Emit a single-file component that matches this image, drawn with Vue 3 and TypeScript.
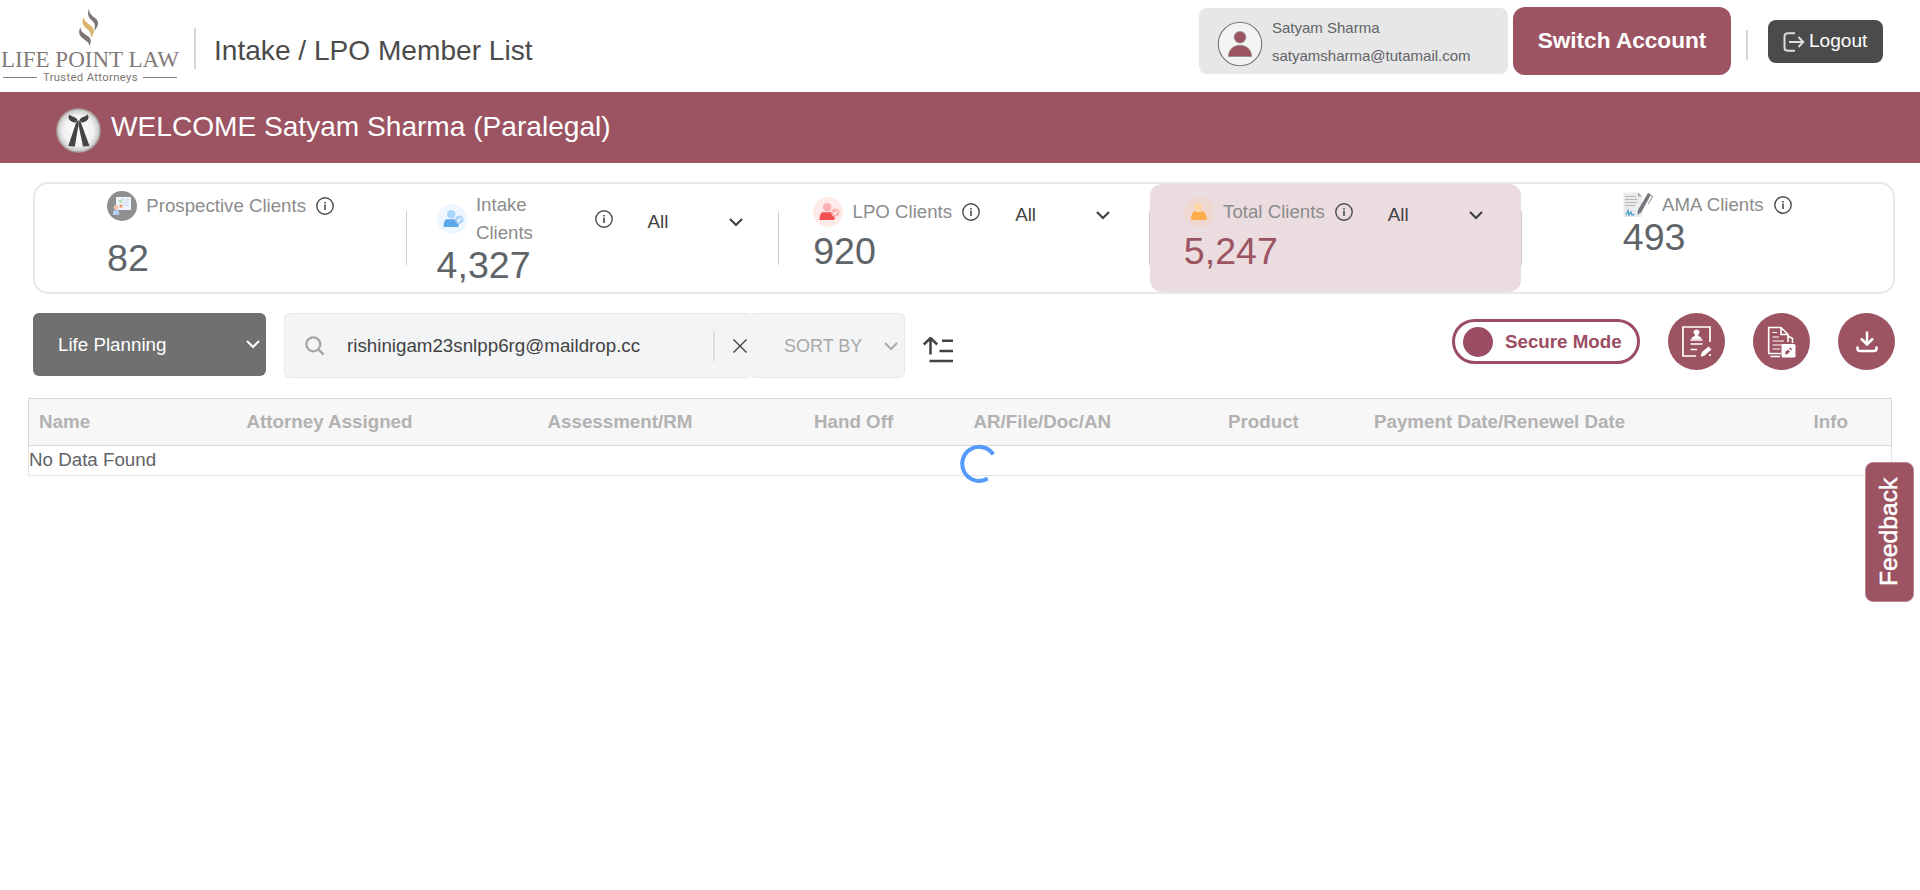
<script setup lang="ts">
interface StatCard {
  key: string
  label: string
  value: string
  select: boolean
  active?: boolean
}

const cards: StatCard[] = [
  { key: 'prospective', label: 'Prospective Clients', value: '82', select: false },
  { key: 'intake', label: 'Intake Clients', value: '4,327', select: true },
  { key: 'lpo', label: 'LPO Clients', value: '920', select: true },
  { key: 'total', label: 'Total Clients', value: '5,247', select: true, active: true },
  { key: 'ama', label: 'AMA Clients', value: '493', select: false },
]

const columns: string[] = [
  'Name',
  'Attorney Assigned',
  'Assessment/RM',
  'Hand Off',
  'AR/File/Doc/AN',
  'Product',
  'Payment Date/Renewel Date',
  'Info',
]
</script>

<template>
  <div class="page">
    <header class="topbar">
      <svg class="logo" width="181" height="86" viewBox="0 0 181 86">
        <g fill="#7d7473">
          <path d="M89 8.500C87 14.500 88.500 17.500 92 20.500C95.500 23.500 95.500 27 94 31C99 26 99.500 21.500 95 18C91 15 89 13 89 8.500Z" />
          <path d="M80.500 27C78 32 79 35.500 83 38.500C87.500 42 90 43 88.800 46.500C92 42 91.500 38.500 87 35.500C82.500 32.500 80.500 31 80.500 27Z" />
        </g>
        <path d="M83.800 17C81.500 22 82.500 25.500 86.500 28.500C90 31.500 91.500 33.500 90.700 38C95 33 95 29 90.500 25.500C86 22 84.300 21 83.800 17Z" fill="#dcb36c" />
        <text class="logo-name" x="1" y="66.500" textLength="178" lengthAdjust="spacingAndGlyphs">LIFE POINT LAW</text>
        <text class="logo-tag" x="43" y="80.500" textLength="94.500" lengthAdjust="spacing">Trusted Attorneys</text>
        <path d="M3 77.500H37M143 77.500H177" stroke="#8a8382" stroke-width="1.100" />
      </svg>
      <div class="rule rule-title"></div>
      <h1 class="title">Intake / LPO Member List</h1>

      <div class="user">
        <svg class="avatar" width="46" height="46" viewBox="0 0 46 46">
          <circle cx="23" cy="23" r="21.700" fill="#f3f3f3" stroke="#777" stroke-width="1.100" />
          <circle cx="23" cy="16.200" r="5.800" fill="#9c5462" stroke="#888" stroke-width=".7" />
          <path d="M11.500 35.500C11.500 20.500 34.500 20.500 34.500 35.500Z" fill="#9c5462" stroke="#888" stroke-width=".7" />
        </svg>
        <div class="user-lines">
          <div>Satyam Sharma</div>
          <div>satyamsharma@tutamail.com</div>
        </div>
      </div>
      <button class="switch">Switch Account</button>
      <div class="rule rule-logout"></div>
      <button class="logout">
        <svg width="22" height="20" viewBox="0 0 22 20" fill="none" stroke="#dcdcdc" stroke-width="2">
          <path d="M12 1.200H5Q1.500 1.200 1.500 4.500V15.500Q1.500 18.800 5 18.800H12" />
          <path d="M6 10H20M15.500 5L20.300 10L15.500 15" />
        </svg>
        <span>Logout</span>
      </button>
    </header>

    <section class="banner">
      <svg class="tie" width="46" height="46" viewBox="0 0 46 46">
        <defs>
          <radialGradient id="disc">
            <stop offset="0" stop-color="#fff" />
            <stop offset=".7" stop-color="#f2f2f2" />
            <stop offset="1" stop-color="#c4c4c4" />
          </radialGradient>
        </defs>
        <circle cx="22.500" cy="23.500" r="21.500" fill="url(#disc)" stroke="#aaa59f" stroke-width="1.500" />
        <g fill="#444">
          <path d="M13.500 7.500C15 9.500 18 9.500 20.500 11.500L21.500 13L19.500 15.500C16 15.500 12 13 12.500 9.500Z" />
          <path d="M31.500 7.500C30 9.500 27 9.500 24.500 11.500L23.500 13L25.500 15.500C29 15.500 33 13 32.500 9.500Z" />
          <path d="M20.500 14.500L22.300 13L22.500 18L18.800 39.500L12.300 39Z" />
          <path d="M24.500 14.500L22.700 13L22.500 18L27 39.500L33.500 39Z" />
        </g>
      </svg>
      <h2>WELCOME Satyam Sharma (Paralegal)</h2>
    </section>

    <section class="stats">
      <div v-for="c in cards" :key="c.key" class="card" :class="[c.key, { active: c.active }]">
        <div class="card-main">
          <div class="card-head">
            <svg v-if="c.key === 'prospective'" class="badge" viewBox="0 0 30 30">
              <circle cx="15" cy="15" r="15" fill="#8f8f8f" />
              <path d="M9 6H24V19H9Z" fill="#eef3fb" />
              <path d="M12 9.500L13.500 11L16 8" fill="none" stroke="#a9d693" stroke-width="1.300" />
              <path d="M17.500 9H21.500M16 11.700H22M17 14.500H21.500" stroke="#c7d1f3" stroke-width="1.100" />
              <rect x="12.500" y="13.500" width="3" height="3" fill="#f49a72" />
              <circle cx="9" cy="16.500" r="2.400" fill="#f0c6b2" />
              <path d="M6 24V21.500Q6 19 9 19Q12 19 12.200 21V24Z" fill="#b5cdf7" />
            </svg>
            <svg v-else-if="c.key === 'ama'" class="badge" viewBox="0 0 30 30">
              <path d="M.5 2.500H15L19 6V27H.5Z" fill="#e9ebec" />
              <path d="M15 2.500L19 6.500H15Z" fill="#aaa" />
              <path d="M2 6.500H13M2 9.500H14M2 12.500H14M2 15.500H12" stroke="#b4b7b9" stroke-width="1.200" />
              <path d="M3 25L5 20.500L6 25L8 22L9 25L11.500 24.500" fill="none" stroke="#4da5cf" stroke-width="1.300" />
              <path d="M25 3L28 4.500L18.500 22L14.500 25L15 20Z" fill="#77757f" />
              <path d="M28 5L29.500 7L25 14" fill="none" stroke="#8a8892" stroke-width="1" />
            </svg>
            <svg v-else class="badge person" viewBox="0 0 30 30">
              <circle class="disc" cx="15" cy="15" r="15" />
              <circle class="head" cx="14.200" cy="10.200" r="4.200" />
              <path v-if="c.key === 'total'" class="body" d="M6.800 21.500Q7.500 16.500 10 14Q15 16 19.500 14Q22.500 17 23 21.500Q23 23 21.500 23H8.300Q6.800 23 6.800 21.500Z" />
              <path v-else class="body" d="M6.500 23Q6.500 17.500 9 15.300H18Q20 19.500 21.800 20.500V21.500Q21.800 23 20 23Z" />
              <circle class="tick-disc" cx="22.300" cy="15.600" r="4.200" />
              <path class="tick" d="M20.300 15.700L21.800 17.200L24.300 14" />
            </svg>
            <span class="label">{{ c.label }}</span>
            <svg class="info" width="18" height="18" viewBox="0 0 18 18">
              <circle cx="9" cy="9" r="8.200" fill="none" stroke="#4b4b4b" stroke-width="1.400" />
              <path d="M9 7.500V13M9 5V6.400" stroke="#4b4b4b" stroke-width="1.600" />
            </svg>
          </div>
          <div class="value">{{ c.value }}</div>
        </div>
        <div v-if="c.select" class="filter">
          <span>All</span>
          <svg width="14" height="9" viewBox="0 0 14 9" fill="none" stroke="#424242" stroke-width="2.200">
            <path d="M1 1L7 7L13 1" />
          </svg>
        </div>
      </div>
    </section>

    <section class="toolbar">
      <div class="plan">
        <span>Life Planning</span>
        <svg width="14" height="9" viewBox="0 0 14 9" fill="none" stroke="#fff" stroke-width="2">
          <path d="M1 1L7 7L13 1" />
        </svg>
      </div>
      <div class="search">
        <svg width="20" height="20" viewBox="0 0 20 20" fill="none" stroke="#a6a6a6" stroke-width="2.300">
          <circle cx="8.300" cy="8.300" r="7" />
          <path d="M13.400 13.400L18.600 18.600" />
        </svg>
        <span class="query">rishinigam23snlpp6rg@maildrop.cc</span>
        <i class="split"></i>
        <svg class="clear" width="14" height="14" viewBox="0 0 14 14" fill="none" stroke="#424242" stroke-width="1.400">
          <path d="M.5 .5L13.500 13.500M13.500 .5L.5 13.500" />
        </svg>
      </div>
      <div class="sort">
        <span>SORT BY</span>
        <svg width="14" height="9" viewBox="0 0 14 9" fill="none" stroke="#aaa" stroke-width="2">
          <path d="M1 1L7 7L13 1" />
        </svg>
      </div>
      <svg class="order" width="30" height="26" viewBox="0 0 30 26" fill="none" stroke="#424242" stroke-width="2.500">
        <path d="M7.500 17.500V1.500M.8 7.500L7.500 1L14.200 7.500M19 3.700H30M16.500 14H30M6.500 24H30" />
      </svg>

      <div class="actions">
        <div class="secure"><i></i><span>Secure Mode</span></div>
        <button class="round">
          <svg width="30" height="32" viewBox="0 0 30 32" fill="none" stroke="#fff" stroke-width="1.700">
            <path d="M28 16V1H1V30H14M28 28V30" />
            <path d="M9.500 13C9.500 10.500 13 10.500 13 9Q11 7 11.500 5Q14.500 2 17.500 5Q18 7 16 9C16 10.500 19.500 10.500 19.500 13Z" fill="#fff" stroke="none" />
            <path d="M8.500 14H20.500M8.500 18H20.500M8.500 23.500H15" stroke-width="1.400" />
            <path d="M18.500 30.500L20 26L26.500 20.500L29.500 23.500L22 30Z" fill="#fff" stroke="none" />
          </svg>
        </button>
        <button class="round">
          <svg width="30" height="32" viewBox="0 0 30 32" fill="none" stroke="#fff" stroke-width="1.600">
            <path d="M14 27.500H1.700V1.500H14L21 8.500V16" />
            <path d="M14 1.500V8.500H21M3.500 30.500H13M21 10L25.500 12.500V17" />
            <path d="M5.500 6.500H10M5.500 11H12M5.500 15H17M5.500 19H15M5.500 23H13" stroke-width="1.200" />
            <rect x="14.500" y="18" width="14" height="13.500" rx="1.500" fill="#fff" stroke="none" />
            <path d="M18 28.500L18.600 25.500L21 23.500L23 25.500L20.800 28Z M22 22.500L23.500 21.500L25 23.300L24 24.500Z" fill="#9c5462" stroke="none" />
          </svg>
        </button>
        <button class="round">
          <svg width="22" height="22" viewBox="0 0 22 22" fill="none" stroke="#fff" stroke-width="2.500">
            <path d="M11 .5V13M5 7.500L11 13.500L17 7.500M1.500 15.500V17.500Q1.500 20 4 20H18Q20.500 20 20.500 17.500V15.500" />
          </svg>
        </button>
      </div>
    </section>

    <section class="table">
      <div class="thead">
        <span v-for="col in columns" :key="col">{{ col }}</span>
      </div>
      <div class="tbody">No Data Found</div>
      <svg class="spinner" width="40" height="40" viewBox="0 0 40 40">
        <path d="M34.300 10.300A17 17 0 1 0 28.700 34.600" fill="none" stroke="#559bff" stroke-width="4" />
      </svg>
    </section>

    <button class="feedback">Feedback</button>
  </div>
</template>

<style>
html,
body {
  background: #fff;
  overflow: hidden;
}
</style>

<style scoped>
.page {
  position: relative;
  width: 1920px;
  height: 890px;
  font-family: 'Liberation Sans', Arial, sans-serif;
  font-size: 18.75px;
  color: #5f6468;
}
.page *,
.page *::before {
  box-sizing: border-box;
}
h1,
h2 {
  margin: 0;
  font-weight: 400;
  white-space: nowrap;
}
button {
  border: 0;
  padding: 0;
  font-family: inherit;
  color: #fff;
}
svg {
  display: block;
  flex: none;
}
.topbar {
  display: flex;
  align-items: flex-start;
  height: 92px;
}
.logo {
  overflow: visible;
}
.logo-name {
  font-family: 'Liberation Serif', serif;
  font-size: 23.5px;
  fill: #827a79;
}
.logo-tag {
  font-family: Roboto, sans-serif;
  font-size: 11.3px;
  fill: #7d7473;
}
.rule {
  width: 2px;
  flex: none;
  background: #d6d6d6;
}
.rule-title {
  height: 41px;
  margin: 28px 0 0 13px;
}
.title {
  margin: 31px 0 0 18px;
  font-size: 28.1px;
  line-height: 40px;
  color: #4b4b4b;
}
.user {
  display: flex;
  width: 309px;
  height: 66px;
  margin: 8px 0 0 auto;
  padding-left: 18px;
  background: #e7e7e7;
  border-radius: 8px;
}
.avatar {
  margin-top: 13px;
}
.user-lines {
  margin: 6px 0 0 9px;
  font-size: 15px;
  line-height: 28px;
}
.switch {
  width: 218px;
  height: 68px;
  margin: 7px 0 0 5px;
  border-radius: 12px;
  background: #9c5462;
  font-size: 22.6px;
  font-weight: 700;
}
.rule-logout {
  height: 30px;
  margin: 30px 0 0 15px;
}
.logout {
  display: flex;
  align-items: center;
  width: 115px;
  height: 43px;
  margin: 20px 37px 0 20px;
  padding-left: 15px;
  gap: 4px;
  border-radius: 8px;
  background: #4b4b4b;
  font-size: 19.1px;
}
.logout span {
  margin-top: -2px;
}
.banner {
  display: flex;
  height: 71px;
  padding-left: 56px;
  background: #9c5462;
}
.tie {
  margin-top: 15px;
}
.banner h2 {
  margin: 15px 0 0 9px;
  font-size: 28.1px;
  line-height: 40px;
  color: #fff;
}
.stats {
  display: grid;
  grid-template-columns: repeat(5, 1fr);
  width: 1862px;
  height: 112px;
  margin: 19px 0 0 33px;
  border: 2px solid #e8e8e8;
  border-radius: 15px;
}
.card {
  position: relative;
  display: flex;
  align-items: flex-start;
}
.card + .card::before {
  content: '';
  position: absolute;
  left: -0.4px;
  top: 27px;
  width: 1px;
  height: 54px;
  background: #cfcdcf;
}
.card.active {
  background: #ebdce0;
  border-radius: 12px;
}
.card-head {
  display: flex;
  align-items: center;
  gap: 10px;
}
.badge {
  width: 30px;
  height: 30px;
}
.label {
  margin: 0 0.7px 0 -0.7px;
  font-size: 18.67px;
  color: #8c8c8c;
  line-height: 28px;
  white-space: nowrap;
}
.value {
  font-size: 37.6px;
  line-height: 36px;
  color: #5f6468;
}
.filter {
  display: flex;
  align-items: center;
  width: 95px;
  margin-left: 35px;
  line-height: 28px;
  justify-content: space-between;
  color: #424242;
}
.prospective {
  padding: 7px 0 0 72px;
}
.prospective .label {
  width: 159px;
}
.prospective .value {
  margin-top: 19px;
}
.intake {
  padding: 7px 0 0 30px;
}
.intake .label {
  width: 108px;
  padding-right: 40px;
  white-space: normal;
}
.intake .filter {
  margin-top: 17px;
}
.lpo {
  padding: 13px 0 0 35px;
}
.lpo .label {
  width: 99px;
}
.lpo .filter,
.total .filter {
  margin-top: 4px;
}
.total {
  padding: 13px 0 0 34px;
}
.total .label {
  width: 101px;
}
.total .value {
  color: #9c5462;
}
.ama {
  padding: 6px 0 0 101.4px;
}
.ama .label {
  width: 101px;
}
.lpo .value,
.total .value {
  margin-top: 6px;
}
.ama .value {
  margin-top: -1px;
}
.intake .disc {
  fill: #eef6ff;
}
.intake .head,
.intake .tick-disc {
  fill: #a9d5fb;
}
.intake .body {
  fill: #5fa8ec;
}
.lpo .disc {
  fill: #ffeaea;
}
.lpo .head,
.lpo .tick-disc {
  fill: #fcb0b0;
}
.lpo .body {
  fill: #f55151;
}
.total .disc {
  fill: #eed8d0;
}
.total .head {
  fill: #ffd6a8;
}
.total .body {
  fill: #ffad4a;
}
.total .tick,
.total .tick-disc {
  display: none;
}
.tick {
  fill: none;
  stroke: #fff;
  stroke-width: 1.2;
}
.toolbar {
  display: flex;
  align-items: flex-start;
  height: 85px;
  padding: 19px 25px 0 33px;
}
.plan {
  display: flex;
  align-items: center;
  justify-content: space-between;
  width: 233px;
  height: 63px;
  padding: 0 6px 0 25px;
  border-radius: 6px;
  background: #707070;
  color: #fff;
}
.search,
.sort {
  display: flex;
  align-items: center;
  height: 65px;
  background: #f3f4f6;
  border: 1px solid #e6e8ea;
}
.search {
  width: 465px;
  margin-left: 18px;
  padding-left: 20px;
  border-right: 0;
  border-radius: 6px 0 0 6px;
}
.query {
  margin-left: 22px;
  width: 366px;
  color: #424242;
}
.split {
  width: 2px;
  height: 30px;
  background: #dcdee0;
}
.clear {
  margin-left: 18px;
}
.sort {
  width: 156px;
  padding: 2px 6px 0 35px;
  border-left: 0;
  border-radius: 6px;
  justify-content: space-between;
  font-size: 18px;
  color: #a8a8a8;
}
.order {
  margin: 24px 0 0 18px;
}
.actions {
  display: flex;
  align-items: center;
  margin-left: auto;
}
.secure {
  display: flex;
  align-items: center;
  width: 188px;
  height: 45px;
  padding-left: 8px;
  border: 3px solid #9b4d63;
  border-radius: 23px;
  color: #9b4d63;
  font-weight: 700;
}
.secure i {
  width: 30px;
  height: 30px;
  margin-right: 12px;
  border-radius: 50%;
  background: #9b4d63;
}
.round {
  display: flex;
  align-items: center;
  justify-content: center;
  width: 57px;
  height: 57px;
  margin-left: 28px;
  border-radius: 50%;
  background: #9c5462;
}
.table {
  position: relative;
  width: 1864px;
  margin: 19px 0 0 28px;
}
.thead {
  display: grid;
  grid-template-columns: 207.5px 301px 266.500px 159.5px 254.500px 146px 439.5px 1fr;
  height: 48px;
  padding-left: 10px;
  border: 1px solid #d8d8d8;
  background: #f7f7f7;
  color: #b2b2b2;
  font-weight: 700;
  line-height: 46px;
  white-space: nowrap;
}
.tbody {
  height: 30px;
  border: 1px solid #e6e6e6;
  border-top: 0;
  line-height: 28px;
}
.spinner {
  position: absolute;
  left: 931px;
  top: 46px;
}
.feedback {
  position: absolute;
  left: 1865px;
  top: 462px;
  width: 49px;
  height: 140px;
  padding-left: 2px;
  border-radius: 8px;
  background: #9c5462;
  border: 1px solid #b98a94;
  writing-mode: vertical-rl;
  transform: rotate(180deg);
  font-size: 24.7px;
  -webkit-text-stroke: 0.5px #fff;
  text-align: center;
}
</style>
